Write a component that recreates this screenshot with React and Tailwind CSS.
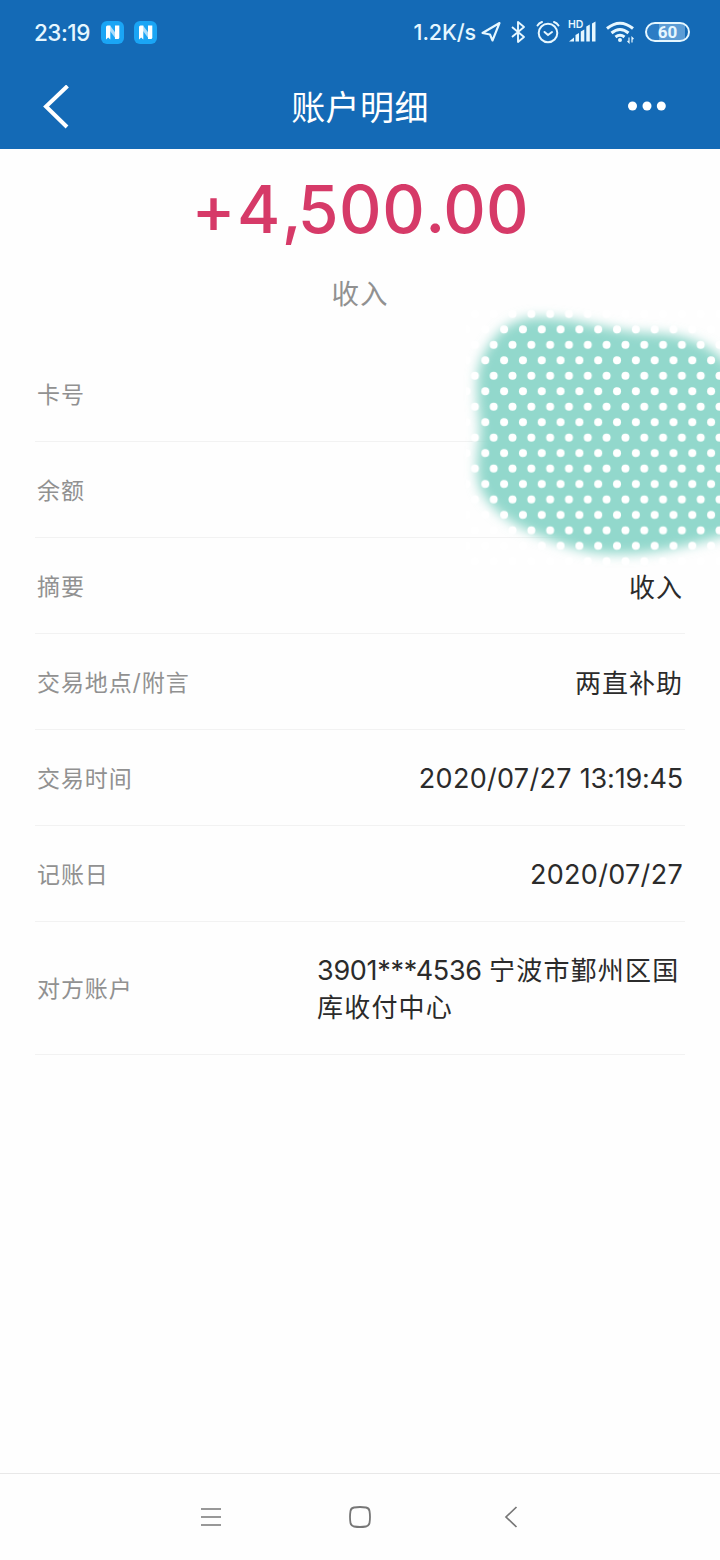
const rows = [
  { label: '卡号', value: '' },
  { label: '余额', value: '' },
  { label: '摘要', value: '收入', cjk: true },
  { label: '交易地点/附言', value: '两直补助', cjk: true },
  { label: '交易时间', value: '2020/07/27', time: '13:19:45' },
  { label: '记账日', value: '2020/07/27' },
];

function NewsIcon() {
  return (
    <svg className="h-[23px] w-[23px]" viewBox="0 0 23 23">
      <rect width="23" height="23" rx="6" fill="#1aa5f5" />
      <path d="M9 4.500l6 8v5.500L9 10z" fill="#a9dcfb" />
      <path d="M5 6Q5 4.500 6.500 4.500H9.300v14l-2.100-2-2.200 2z" fill="#fff" />
      <path d="M14 4.500h4.300V16.500q0 1.500-1.500 1.500H14z" fill="#fff" />
    </svg>
  );
}

function StatusBar() {
  return (
    <div className="flex h-16 items-center justify-between pl-[34px] pr-[30px] text-[#e6f7ff]">
      <div className="flex items-center">
        <span className="w-[67px] whitespace-nowrap pt-px text-[22.500px] font-medium tracking-[-0.5px]">23:19</span>
        <NewsIcon />
        <span className="w-2.5" />
        <NewsIcon />
      </div>
      <div className="flex items-center">
        <span className="mr-[5px] whitespace-nowrap pt-px text-[21.500px] font-medium tracking-[-0.1px]">1.2K/s</span>
        <svg className="mr-[10px] h-[22px] w-5" viewBox="0 0 20 22" fill="none" stroke="currentColor" strokeWidth="2.100" strokeLinejoin="round">
          <path d="M1.500 12 18.500 2 11.500 19.500 9 13.500z" />
        </svg>
        <svg className="mr-2.5 h-[24px] w-[15px]" viewBox="0 0 15 24" fill="none" stroke="currentColor" strokeWidth="1.900" strokeLinejoin="round">
          <path d="M1 7l12 10-6 5V2l6 5L1 17" />
        </svg>
        <svg className="mr-[8px] h-6 w-6" viewBox="0 0 24 24" fill="none" stroke="currentColor" strokeWidth="2" strokeLinecap="round">
          <circle cx="12" cy="13" r="9.300" />
          <path d="M8.500 12l3.500 3 4-3M1.500 5.500Q3 3 6 2M22.500 5.500Q21 3 18 2" />
        </svg>
        <div className="relative mr-[9px] h-6 w-[29px]">
          <span className="absolute left-0 top-[-1px] text-[10.500px] leading-[12px] font-semibold">HD</span>
          <svg className="h-6 w-[29px]" viewBox="0 0 29 24" fill="currentColor">
            <path d="M1 21.500l5-4v4zM7.500 15l3.500-2v8.500H7.500zM12.800 11.500l3.500-2v12h-3.500zM18.300 6.500l3.500-2v17h-3.500zM24 3.500l3.500-2v20H24z" />
          </svg>
        </div>
        <svg className="mr-[11px] h-6 w-7" viewBox="0 0 28 24" fill="none" stroke="currentColor" strokeWidth="3">
          <path d="M1 8.500Q14-2 27 8.500M5.500 13Q14 6 22.500 13M9.500 17Q14 13.500 18.500 17" />
          <circle cx="14" cy="20" r="1" strokeWidth="2" />
          <path d="M23 17.500v5l-1.500-1.500M26 22.500v-5l1.500 1.500" strokeWidth="1.200" />
        </svg>
        <div className="flex h-5 w-[45px] items-center justify-center rounded-full border-2 border-current bg-[linear-gradient(90deg,#2c7cc4_0_12px,#5b9cd5_12px_38px,transparent_38px)] font-['Roboto'] text-[17px] leading-none font-bold">
          60
        </div>
      </div>
    </div>
  );
}

function Header() {
  return (
    <div className="flex h-[85px] items-center justify-between pl-[43px] pr-[54px] text-white">
      <svg className="h-11 w-[26px]" viewBox="0 0 26 44" fill="none" stroke="currentColor" strokeWidth="4">
        <path d="M24.500 1 3 21.500l21 20.500" />
      </svg>
      <h1 className="ml-[23px] pt-[3px] text-[34px] leading-[44px] tracking-[0.4px]">账户明细</h1>
      <svg className="mb-0.5 h-[10px] w-[38px]" viewBox="0 0 38 10" fill="currentColor">
        <circle cx="4.500" cy="5" r="4.500" />
        <circle cx="19" cy="5" r="4.500" />
        <circle cx="33.300" cy="5" r="4.500" />
      </svg>
    </div>
  );
}

// Dotted brush stroke covering the card number and the balance
function Cover() {
  return (
    <svg className="absolute right-0 top-[141px] h-[290px] w-[280px]" viewBox="440 290 280 290">
      <defs>
        <filter id="soft" x="-20%" y="-20%" width="140%" height="140%">
          <feGaussianBlur stdDeviation="6" />
        </filter>
        <pattern id="dots" x="484.300" y="306.200" width="18.820" height="30.920" patternUnits="userSpaceOnUse">
          <circle cx="9.400" cy="7.800" r="4" fill="#fff" />
          <circle cx="1" cy="23.200" r="4" fill="#fff" />
          <circle cx="19.820" cy="23.200" r="4" fill="#fff" />
        </pattern>
      </defs>
      <path
        d="M550 318C570 319 585 323 600 326S630 332 650 333C685 334 703 343 716 353L750 385V527L720 537C690 545 655 555 615 554C583 554 558 543 533 533C507 522 486 505 479 486C474 466 479 447 480 432C480 420 477 405 477 390C476 367 482 353 495 337C508 321 529 315 550 318Z"
        fill="#92d8cc"
        filter="url(#soft)"
      />
      <rect x="466" y="306" width="254" height="262" fill="url(#dots)" />
    </svg>
  );
}

function Row({ label, value, time, cjk }) {
  return (
    <div className="flex h-24 items-center justify-between border-b border-[#f2f2f2] px-0.5 pt-1">
      <Label text={label} />
      {cjk ? (
        <span className="text-[26px] tracking-[1px] text-[#2b2b2b]">{value}</span>
      ) : (
        <span className="flex gap-2 whitespace-nowrap text-[27px] text-[#2b2b2b]">
          <span className="tracking-[0.3px]">{value}</span>
          {time && <span className="tracking-[-0.2px]">{time}</span>}
        </span>
      )}
    </div>
  );
}

function Label({ text }) {
  return <span className="text-[23px] tracking-[0.9px] text-[#919191]">{text}</span>;
}

function NavBar() {
  return (
    <div className="flex h-[87px] items-center border-t border-[#e8e8e8] pl-[200px] text-[#777]">
      <svg className="h-[22px] w-[22px]" viewBox="0 0 22 22" stroke="currentColor" strokeWidth="1.700">
        <path d="M1 3h20M1 11h20M1 19h20" />
      </svg>
      <svg className="ml-[127px] h-[22px] w-[22px]" viewBox="0 0 22 22" fill="none" stroke="currentColor" strokeWidth="1.800">
        <path d="M5 1.500Q11 .5 17 1.500 20 2 20.500 5 21.500 11 20.500 17 20 20 17 20.500 11 21.500 5 20.500 2 20 1.500 17 .5 11 1.500 5 2 2 5 1.500Z" />
      </svg>
      <svg className="ml-[133px] h-[22px] w-[14px]" viewBox="0 0 14 22" fill="none" stroke="currentColor" strokeWidth="1.700">
        <path d="M12.500 1 2 11l10.500 10" />
      </svg>
    </div>
  );
}

export default function App() {
  return (
    <div className="flex h-[1560px] w-[720px] flex-col overflow-hidden bg-[#fefefe] font-['Inter','Noto_Sans_CJK_SC',sans-serif]">
      <header className="h-[149px] bg-[#146ab6]">
        <StatusBar />
        <Header />
      </header>
      <main className="relative flex-1 px-[35px]">
        <div className="flex h-[197px] flex-col items-center">
          <div className="mt-[20px] whitespace-nowrap text-[66px] leading-[80px] font-medium text-[#d63a68]">
            <span className="tracking-[1.500px]">+4</span>
            <span className="tracking-[-4px]">,</span>
            <span className="tracking-[0.5px]">500</span>
            <span className="tracking-[-2px]">.</span>
            <span>00</span>
          </div>
          <div className="mt-[25px] text-[27.500px] leading-[40px] tracking-[1px] text-[#919191]">收入</div>
        </div>
        {rows.map(row => (
          <Row key={row.label} {...row} />
        ))}
        <div className="flex h-[133px] items-center justify-between border-b border-[#f2f2f2] pt-0.5 pl-0.5">
          <Label text="对方账户" />
          <div className="w-[368px] text-[26px] leading-[37px] tracking-[1.200px] text-[#2b2b2b]">
            <div className="whitespace-nowrap"><span className="text-[27px] tracking-[-0.3px]">3901***4536 </span>宁波市鄞州区国</div>
            <div>库收付中心</div>
          </div>
        </div>
        <Cover />
      </main>
      <NavBar />
    </div>
  );
}
